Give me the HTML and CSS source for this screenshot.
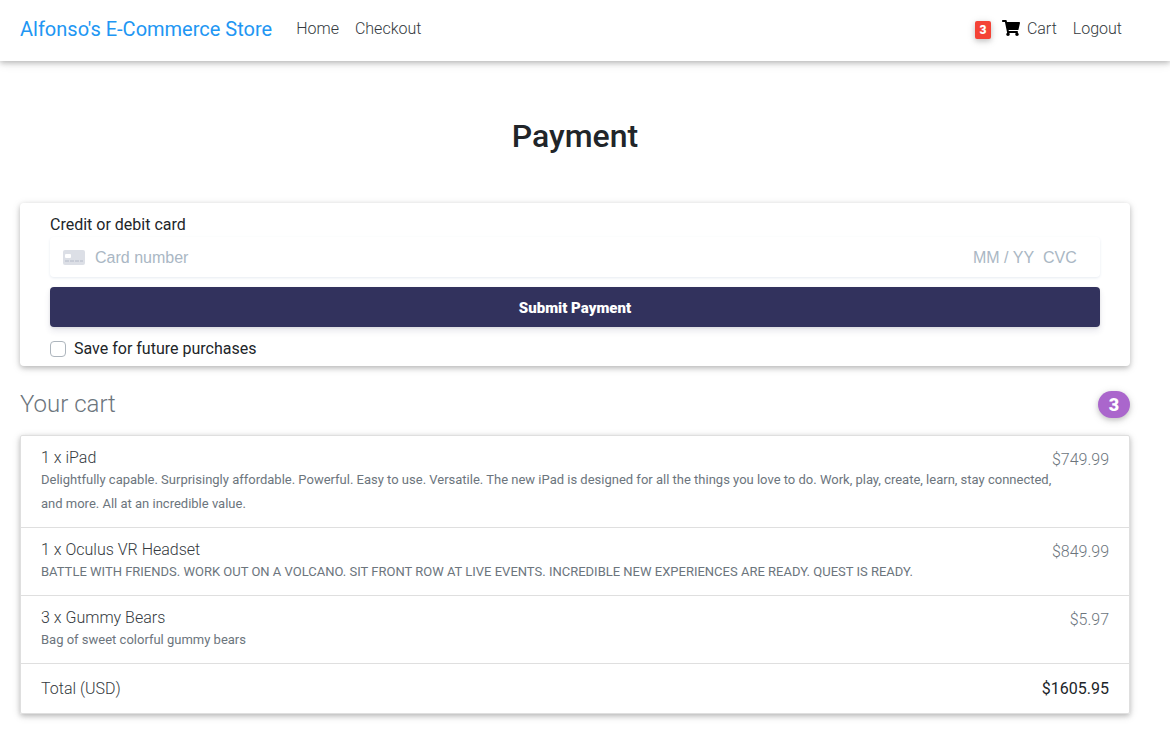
FILE: index.html
```html
<!DOCTYPE html>
<html lang="en">
<head>
<meta charset="utf-8">
<meta name="viewport" content="width=device-width, initial-scale=1">
<title>Payment</title>
<link rel="stylesheet" href="styles.css">
</head>
<body>
<nav class="navbar">
  <a class="brand" href="#">Alfonso's E-Commerce Store</a>
  <a class="nav-link" href="#">Home</a>
  <a class="nav-link" href="#">Checkout</a>
  <a class="nav-link cart-link" href="#">
    <span class="badge badge-red">3</span>
    <svg class="cart-icon" viewBox="0 0 576 512" aria-hidden="true"><path d="M528.12 301.319l47.273-208C578.806 78.301 567.391 64 551.99 64H159.208l-9.166-44.81C147.758 8.021 137.93 0 126.529 0H24C10.745 0 0 10.745 0 24v16c0 13.255 10.745 24 24 24h69.883l70.248 343.435C147.325 417.1 136 435.222 136 456c0 30.928 25.072 56 56 56s56-25.072 56-56c0-15.674-6.447-29.835-16.824-40h209.647C430.447 426.165 424 440.326 424 456c0 30.928 25.072 56 56 56s56-25.072 56-56c0-22.172-12.888-41.332-31.579-50.405l5.517-24.276c3.413-15.018-8.002-29.319-23.403-29.319H218.117l-6.545-32h293.145c11.206 0 20.92-7.754 23.403-18.681z"/></svg>
    <span>Cart</span>
  </a>
  <a class="nav-link" href="#">Logout</a>
</nav>
<main class="page">
  <h1 class="title">Payment</h1>
  <form class="payment">
    <label class="field-label" for="card-number">Credit or debit card</label>
    <div class="card-field">
      <svg class="card-icon" viewBox="0 0 22 15" aria-hidden="true">
        <rect width="22" height="15" rx="2" fill="#dcdfe6"/>
        <rect x="2" y="4" width="6" height="4" rx="1" fill="#fff"/>
        <path d="M2 11h4M7 11h4M12 11h4M17 11h3" stroke="#b4bac8" stroke-width="1"/>
      </svg>
      <input class="card-input card-number" id="card-number" type="text" placeholder="Card number">
      <input class="card-input card-expiry" type="text" placeholder="MM / YY" aria-label="Expiry date">
      <input class="card-input card-cvc" type="text" placeholder="CVC" aria-label="CVC">
    </div>
    <button class="submit" type="button">Submit Payment</button>
    <div class="save-row">
      <input class="checkbox" id="save" type="checkbox">
      <label for="save">Save for future purchases</label>
    </div>
  </form>
  <div class="cart-head">
    <h2 class="cart-title">Your cart</h2>
    <span class="badge badge-purple">3</span>
  </div>
  <ul class="cart-list">
    <li class="cart-item">
      <div>
        <h3 class="item-name">1 x iPad</h3>
        <p class="item-text">Delightfully capable. Surprisingly affordable. Powerful. Easy to use. Versatile. The new iPad is designed for all the things you love to do. Work, play, create, learn, stay connected, and more. All at an incredible value.</p>
      </div>
      <span class="price">$749.99</span>
    </li>
    <li class="cart-item">
      <div>
        <h3 class="item-name">1 x Oculus VR Headset</h3>
        <p class="item-text">BATTLE WITH FRIENDS. WORK OUT ON A VOLCANO. SIT FRONT ROW AT LIVE EVENTS. INCREDIBLE NEW EXPERIENCES ARE READY. QUEST IS READY.</p>
      </div>
      <span class="price">$849.99</span>
    </li>
    <li class="cart-item">
      <div>
        <h3 class="item-name">3 x Gummy Bears</h3>
        <p class="item-text">Bag of sweet colorful gummy bears</p>
      </div>
      <span class="price">$5.97</span>
    </li>
    <li class="cart-item">
      <span>Total (USD)</span>
      <strong class="total">$1605.95</strong>
    </li>
  </ul>
</main>
</body>
</html>
```
FILE: styles.css
```css
* {
  box-sizing: border-box;
}

body {
  margin: 0;
  background: #fff;
  color: #212529;
  font-family: Roboto, sans-serif;
  font-size: 16px;
  font-weight: 300;
  line-height: 24px;
}

h1, h2, h3, p, ul {
  margin: 0;
  padding: 0;
}

.navbar {
  display: flex;
  align-items: center;
  padding: 7px 40px 9px 20px;
  box-shadow: 0 2px 5px rgba(0, 0, 0, .2), 0 2px 10px rgba(0, 0, 0, .12);
}

.brand {
  margin-right: 16px;
  color: #2196f3;
  font-size: 20px;
  font-weight: 400;
  line-height: 45px;
  text-decoration: none;
}

.nav-link {
  padding: 0 8px 2px;
  color: #343a40;
  text-decoration: none;
}

.cart-link {
  display: flex;
  align-items: center;
  margin-left: auto;
}

.badge {
  color: #fff;
  font-weight: 900;
  text-align: center;
  box-shadow: 0 2px 5px rgba(0, 0, 0, .16), 0 2px 10px rgba(0, 0, 0, .12);
}

.badge-red {
  width: 16px;
  margin: 2px 11px 0 0;
  border-radius: 2px;
  background: #f44336;
  font-size: 12px;
  line-height: 18px;
}

.cart-icon {
  width: 18px;
  height: 16px;
  margin: 0 7px 2px 0;
  fill: #000;
}

.page {
  padding: 56px 40px 30px 20px;
}

.title {
  font-size: 32px;
  font-weight: 500;
  line-height: 38px;
  text-align: center;
}

.payment {
  margin-top: 48px;
  padding: 10px 30px 5px;
  border-radius: 4px;
  box-shadow: 0 2px 5px rgba(0, 0, 0, .2), 0 2px 10px rgba(0, 0, 0, .12);
}

.field-label {
  display: block;
  font-weight: 400;
}

.card-field {
  display: flex;
  align-items: center;
  height: 40px;
  padding: 0 12px;
  border-radius: 4px;
  box-shadow: 0 1px 3px #e6ebf1;
}

.card-icon {
  width: 22px;
  height: 15px;
  margin: 0 10px 0 1px;
}

.card-input {
  min-width: 0;
  padding: 2px 0 0;
  border: 0;
  background: none;
  font-family: "Liberation Sans", Arial, sans-serif;
  font-size: 16px;
}

.card-input::placeholder {
  color: #aab7c4;
  opacity: 1;
}

.card-number {
  flex: 1;
}

.card-expiry {
  width: 70px;
}

.card-cvc {
  width: 45px;
}

.submit {
  display: block;
  width: 100%;
  height: 40px;
  margin: 10px 0;
  padding: 2px 0 0;
  border: 0;
  border-radius: 4px;
  background: #32325d;
  color: #fff;
  font-family: Roboto, sans-serif;
  font-size: 15px;
  font-weight: 900;
  box-shadow: 0 4px 6px rgba(50, 50, 93, .11), 0 1px 3px rgba(0, 0, 0, .08);
}

.save-row {
  display: flex;
  align-items: center;
  gap: 8px;
  font-weight: 400;
}

.checkbox {
  appearance: none;
  width: 16px;
  height: 16px;
  margin: 0;
  border: 1px solid #adb5bd;
  border-radius: 4px;
  background: #fff;
}

.cart-head {
  display: flex;
  align-items: center;
  justify-content: space-between;
  margin: 24px 0 16px;
}

.cart-title {
  color: #6c757d;
  font-size: 24px;
  font-weight: 300;
  line-height: 29px;
}

.badge-purple {
  width: 32px;
  border-radius: 14px;
  background: #aa66cc;
  font-size: 18px;
  line-height: 27px;
}

.cart-list {
  border: 1px solid #dfdfdf;
  border-radius: 2px;
  list-style: none;
  box-shadow: 0 2px 5px rgba(0, 0, 0, .2), 0 2px 10px rgba(0, 0, 0, .12);
}

.cart-item {
  display: flex;
  justify-content: space-between;
  padding: 12px 20px 11px;
  color: #343a40;
}

.cart-item + .cart-item {
  border-top: 1px solid #dfdfdf;
}

.cart-item:last-child {
  padding: 13px 20px 12px;
}

.item-name {
  font-size: 16px;
  font-weight: 300;
  line-height: 20px;
}

.item-text {
  color: #6c757d;
  font-size: 13px;
  font-weight: 400;
}

.price {
  color: #6c757d;
}

.total {
  color: #212529;
  font-weight: 400;
}
```
